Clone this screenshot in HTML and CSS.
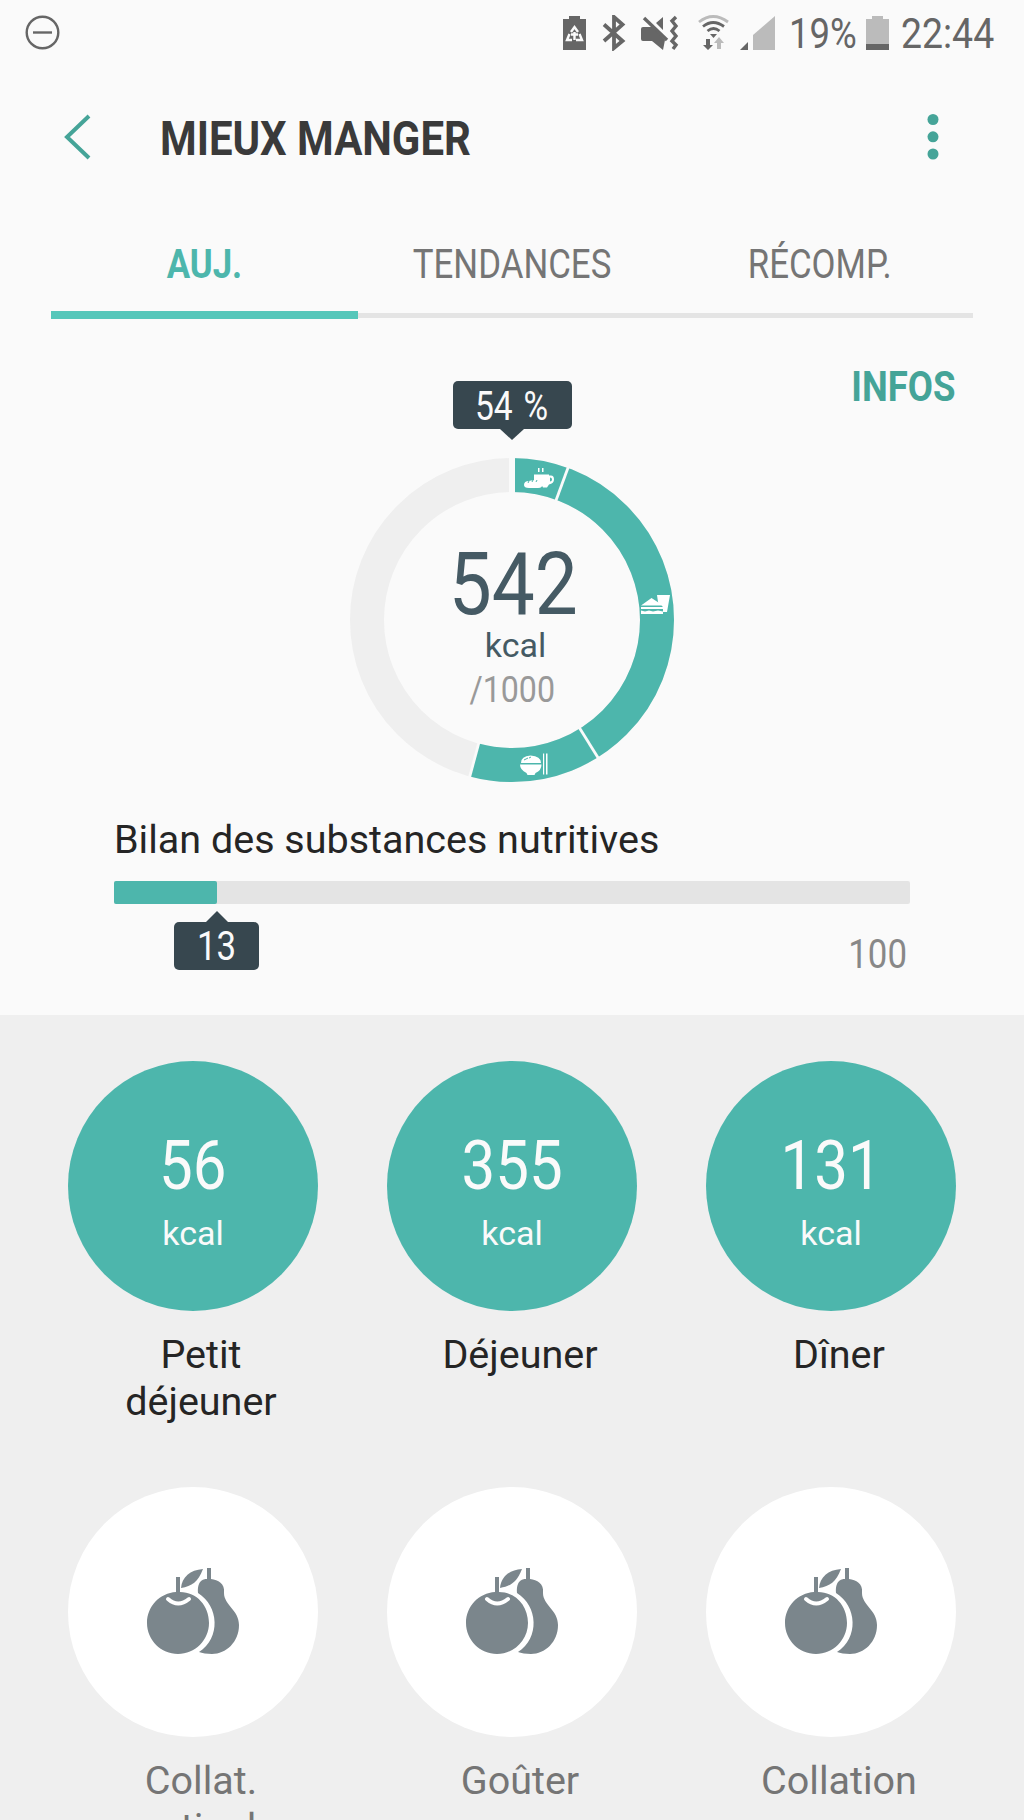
FILE: index.html
```html
<!DOCTYPE html>
<html lang="fr">
	<head>
		<meta charset="UTF-8">
		<title>Mieux manger</title>
		<link rel="stylesheet" href="styles.css">
	</head>
	<body>
		<svg class="defs" width="0" height="0">
			<symbol id="fruit" viewBox="0 0 94 90">
				<path d="M52 27C51 15 57 13 61 13V2h4v11c7 1 14 4 13 14 0 12 15 17 15 32 0 17-13 29-27 29-5 0-10-1-13-2C75 72 73 40 52 27Z"/>
				<path d="M30 11h4v15c17 0 29 14 29 31S49 88 32 88 1 74 1 57 14 27 30 26Z"/>
				<path d="M35 22C36 11 44 4 57 3 52 16 46 20 35 22Z"/>
				<path class="shine" d="M22 33q10 9 21 0"/>
			</symbol>
		</svg>
		<div class="statusbar">
			<svg class="st-dnd" width="36" height="36" viewBox="0 0 36 36">
				<circle cx="17.500" cy="17.500" r="15.800"/>
				<path d="M8 17.500h19"/>
			</svg>
			<svg class="st-saver" width="23" height="36" viewBox="0 0 23 36">
				<path d="M6 1h11v3h6v31H0V4h6Z"/>
				<path class="recycle" d="M8 17l3.500-5 3.500 5M6.500 19l-2.500 6h5M16.500 19l2.500 6h-6"/>
				<path class="recycle" d="M8 19.500h7M11.500 17v8"/>
			</svg>
			<svg class="st-bt" width="24" height="36" viewBox="0 0 24 36">
				<path d="M2 9.500L20.500 26 12 33V2l8.500 7.500L2 26"/>
			</svg>
			<svg class="st-mute" width="38" height="36" viewBox="0 0 38 36">
				<path d="M0 14q0-2 2-2h10l12 13-2 10-11-9H2q-2 0-2-2ZM15 8l7-6v13Z"/>
				<path class="line" d="M3 3l23 22"/>
				<path class="line" d="M35 2l-4 4 4 5-4 5 4 5-4 5 4 4-3 4"/>
			</svg>
			<svg class="st-wifi" width="32" height="36" viewBox="0 0 32 36">
				<path class="pale" d="M1 7q14-11 29 0"/>
				<path d="M5 11.500q10-8 21 0M9.500 16q6-5 12 0"/>
				<path class="fill" d="M12 19h7l-3.500 4ZM8 24h4v6h3l-5 5-5-5h3Z"/>
				<path class="fill-pale" d="M21 22l5 6h-3v6h-4v-6h-3Z"/>
			</svg>
			<svg class="st-signal" width="36" height="36" viewBox="0 0 36 36">
				<path class="pale" d="M13 35V20L35 1v34Z"/>
				<path d="M0 35l8-8v8Z"/>
			</svg>
			<span class="st-percent">19%</span>
			<svg class="st-battery" width="23" height="36" viewBox="0 0 23 36">
				<path class="pale" d="M6 1h11v3h6v25H0V4h6Z"/>
				<path d="M0 29h23v6H0Z"/>
			</svg>
			<span class="st-time">22:44</span>
		</div>

		<div class="header">
			<svg class="back" width="28" height="48" viewBox="0 0 28 48">
				<path d="M25 3L3 24l22 21"/>
			</svg>
			<h1 class="title">MIEUX MANGER</h1>
			<svg class="more" width="12" height="46" viewBox="0 0 12 46">
				<circle cx="6" cy="5.500" r="5.500"/>
				<circle cx="6" cy="22.800" r="5.500"/>
				<circle cx="6" cy="40" r="5.500"/>
			</svg>
		</div>

		<div class="tabs">
			<div class="tab active"><span class="cond">AUJ.</span></div>
			<div class="tab"><span class="cond">TENDANCES</span></div>
			<div class="tab"><span class="cond">RÉCOMP.</span></div>
		</div>

		<div class="summary">
			<div class="gauge">
				<div class="tip tip-down"><span class="cond">54 %</span></div>
				<div class="ring">
					<svg width="324" height="324" viewBox="0 0 324 324">
						<!-- 54,2 % du cercle : 56 + 355 + 131 kcal sur 1000 -->
						<circle class="track" cx="162" cy="162" r="145"/>
						<circle class="value" cx="162" cy="162" r="145" pathLength="1000" stroke-dasharray="542 458" transform="rotate(-90 162 162)"/>
						<path class="start" d="M162 0v36"/>
						<g class="cut">
							<path transform="rotate(20.200 162 162)" d="M162 -1v37"/>
							<path transform="rotate(148 162 162)" d="M162 -1v37"/>
							<path transform="rotate(195.100 162 162)" d="M162 -1v37"/>
						</g>
						<g class="meal">
							<path d="M184 16.500h15v1h2q3 0 3 4t-5 5l-2 3h-4q-2-5-9-6Zm16 3v4q2 0 2-2t-2-2Z" fill-rule="evenodd"/>
							<path d="M174 27q0-4 5-4 10-3 13 3 1 4-4 4h-9q-5 0-5-3ZM188 10h1.500v4H188ZM192 10h1.500v4H192Z"/>
							<path class="detail" d="M178 25l1-2M182 24l1-2M186 24l1-2"/>
							<path d="M307 137h13l-3 17h-4v-5l-5-5ZM291 147.500l10.500-7.500 11.500 7.500ZM291 149h22v2h-22ZM291 156v-3.500l4 1 4-1 4 1 5-1 5 1v2.500Z"/>
							<path d="M171 305q0-7 9.500-7.500 10.500.500 10.500 7.500ZM170 306.500h21.500q0 6-6 8.500l-1 2h-7l-1-2q-6.500-3-6.500-8.500ZM193 295.500h1.200v21H193ZM196 295.500h1.500v21H196Z"/>
							<path class="detail" d="M174 302l4-2M179 300l2-1"/>
						</g>
					</svg>
					<div class="ring-text">
						<div class="ring-kcal"><span class="cond">542</span></div>
						<div class="ring-unit">kcal</div>
						<div class="ring-goal"><span class="cond">/1000</span></div>
					</div>
				</div>
			</div>
			<div class="infos"><span class="cond">INFOS</span></div>
		</div>

		<div class="balance">
			<h2>Bilan des substances nutritives</h2>
			<div class="bar"><div class="bar-fill" style="width: 13%"></div></div>
			<div class="scale">
				<div class="tip tip-up" style="left: 13%"><span class="cond">13</span></div>
				<span class="max">100</span>
			</div>
		</div>

		<div class="meals">
			<div class="item">
				<div class="circle"><span class="num">56</span><span class="unit">kcal</span></div>
				<div class="label">Petit<br>déjeuner</div>
			</div>
			<div class="item">
				<div class="circle"><span class="num">355</span><span class="unit">kcal</span></div>
				<div class="label">Déjeuner</div>
			</div>
			<div class="item">
				<div class="circle"><span class="num">131</span><span class="unit">kcal</span></div>
				<div class="label">Dîner</div>
			</div>
			<div class="item empty">
				<div class="circle"><svg class="fruit" width="94" height="90"><use href="#fruit"/></svg></div>
				<div class="label">Collat.<br>matinale</div>
			</div>
			<div class="item empty">
				<div class="circle"><svg class="fruit" width="94" height="90"><use href="#fruit"/></svg></div>
				<div class="label">Goûter</div>
			</div>
			<div class="item empty">
				<div class="circle"><svg class="fruit" width="94" height="90"><use href="#fruit"/></svg></div>
				<div class="label">Collation</div>
			</div>
		</div>
	</body>
</html>
```
FILE: styles.css
```css
* {
	margin: 0;
	padding: 0;
	box-sizing: border-box;
}
body {
	height: 1820px;
	overflow: hidden;
	background-color: #fafafa;
	font-family: Roboto, "Liberation Sans", sans-serif;
	font-size: 40px;
	color: #252525;
	display: flex;
	flex-direction: column;
}
svg {
	display: block;
	flex: none;
}
.defs {
	position: absolute;
}
/* narrow lettering */
.cond {
	display: inline-block;
	white-space: nowrap;
	transform: scaleX(.87);
}

/* status bar */
.statusbar {
	height: 66px;
	padding-left: 25px;
	display: flex;
	align-items: center;
	color: #666;
	fill: #666;
	font-size: 43px;
	line-height: 66px;
	flex: none;
}
.statusbar .pale {
	fill: #bbb;
}
.st-dnd {
	fill: none;
	stroke: #666;
	stroke-width: 2.4;
	margin-right: 502px;
}
.st-saver {
	margin-right: 16px;
}
.st-saver .recycle {
	fill: none;
	stroke: #fafafa;
	stroke-width: 2.4;
}
.st-bt {
	fill: none;
	stroke: #666;
	stroke-width: 3.8;
	margin-right: 15px;
}
.st-mute {
	margin-right: 19px;
}
.st-mute .line {
	fill: none;
	stroke: #666;
	stroke-width: 3.4;
}
.st-wifi {
	fill: none;
	stroke: #666;
	stroke-width: 2.8;
	margin-right: 10px;
}
.statusbar .st-wifi .pale {
	fill: none;
	stroke: #bbb;
}
.st-wifi .fill {
	fill: #666;
	stroke: none;
}
.st-wifi .fill-pale {
	fill: #bbb;
	stroke: none;
}
.st-signal {
	margin-right: 13px;
}
.st-percent,
.st-time {
	transform: scaleX(.87);
	transform-origin: left;
	white-space: nowrap;
}
.st-percent {
	width: 77px;
	transform: scaleX(.85);
}
.st-battery {
	margin-right: 12px;
}

/* header */
.header {
	height: 146px;
	padding: 0 85px 0 64px;
	display: flex;
	align-items: center;
	flex: none;
}
.back {
	fill: none;
	stroke: #45a498;
	stroke-width: 4;
	margin: -4px 68px 0 0;
}
.title {
	flex: 1;
	font-size: 49px;
	font-weight: 700;
	color: #3a3a3a;
	margin-top: -2px;
	transform: scaleX(.855);
	transform-origin: left;
}
.more {
	fill: #45a498;
	margin-top: -4px;
}

/* tabs */
.tabs {
	height: 107px;
	margin: 0 51px;
	display: grid;
	grid-template-columns: repeat(3, 1fr);
	align-items: start;
	text-align: center;
	line-height: 105px;
	color: #757575;
	flex: none;
}
.tab {
	height: 106px;
	border-bottom: 5px solid #e4e4e4;
}
.tab.active {
	height: 107px;
	border-bottom: 8px solid #55c7ba;
	color: #4db6ac;
	font-weight: 700;
}

/* daily gauge */
.summary {
	height: 463px;
	padding-top: 62px;
	display: grid;
	grid-template-columns: 1fr 324px 1fr;
	flex: none;
}
.gauge {
	grid-column: 2;
}
.infos {
	font-size: 43px;
	font-weight: 700;
	color: #45a498;
	text-align: right;
	line-height: 10px;
	padding-right: 67px;
}
.infos .cond {
	transform: scaleX(.85);
	transform-origin: 94% 50%;
}
.tip {
	width: 119px;
	height: 48px;
	line-height: 51px;
	border-radius: 5px;
	background-color: #37474f;
	color: #fafafa;
	text-align: center;
	position: relative;
}
.tip::after {
	content: "";
	position: absolute;
	left: 50%;
	border: 11px solid transparent;
	transform: translateX(-50%);
}
.tip-down {
	margin: 0 auto 29px;
}
.tip-down .cond {
	word-spacing: 3px;
	transform: scaleX(.84);
}
.tip-down::after {
	top: 100%;
	border-width: 12px;
	border-top: 11px solid #37474f;
	border-bottom: none;
}
.ring {
	display: grid;
}
.ring > * {
	grid-area: 1 / 1;
}
.ring circle {
	fill: none;
	stroke-width: 34;
}
.track {
	stroke: #efefef;
}
.value {
	stroke: #4db6ac;
}
.start {
	stroke: #fafafa;
	stroke-width: 6;
}
.cut {
	stroke: #fafafa;
	stroke-width: 2.8;
}
.meal {
	fill: #fff;
}
.meal .detail {
	fill: none;
	stroke: #4db6ac;
	stroke-width: 1;
}
.ring-text {
	padding-top: 85px;
	text-align: center;
	color: #455a64;
}
.ring-kcal {
	font-size: 88px;
	line-height: 82px;
	padding-left: 2px;
}
.ring-unit {
	font-size: 34px;
	line-height: 41px;
	padding-left: 7px;
}
.ring-goal {
	font-size: 37px;
	line-height: 47px;
	color: #999;
}

/* nutrient balance */
.balance {
	height: 233px;
	padding: 15px 114px 0;
	flex: none;
}
.balance h2 {
	font-size: 39.500px;
	font-weight: 400;
	line-height: 84px;
	padding-top: 1px;
	height: 84px;
}
.bar {
	height: 23px;
	border-radius: 2px;
	background-color: #e4e4e4;
}
.bar-fill {
	height: 100%;
	border-radius: 2px;
	background-color: #4db6ac;
}
.scale {
	position: relative;
	text-align: right;
	line-height: 102px;
	color: #888;
}
.max {
	display: inline-block;
	transform: scaleX(.87);
	transform-origin: right;
	padding-right: 4px;
}
.tip-up {
	position: absolute;
	top: 18px;
	width: 85px;
	margin-left: -43px;
	line-height: 50px;
}
.tip-up::after {
	bottom: 100%;
	border-bottom-color: #37474f;
	border-top: none;
}

/* meals */
.meals {
	flex: 1;
	padding: 46px 68px 0;
	display: grid;
	grid-template-columns: repeat(3, 250px);
	grid-auto-rows: 426px;
	column-gap: 69px;
	background-color: #efefef;
}
.circle {
	width: 250px;
	height: 250px;
	border-radius: 50%;
	background-color: #4db6ac;
	color: #fafafa;
	display: flex;
	flex-direction: column;
	align-items: center;
	padding-top: 64px;
}
.num {
	font-size: 69px;
	line-height: 81px;
	transform: scaleX(.87);
}
.unit {
	font-size: 34px;
	line-height: 55px;
}
.label {
	font-size: 39.500px;
	padding: 20px 0 0 16px;
	text-align: center;
	line-height: 47px;
}
.empty .circle {
	background-color: #fff;
	padding-top: 79px;
}
.empty .label {
	color: #757575;
	padding-top: 20px;
}
.fruit {
	fill: #7b868c;
}
.shine {
	fill: none;
	stroke: #fff;
	stroke-width: 4;
	stroke-linecap: round;
}
```
